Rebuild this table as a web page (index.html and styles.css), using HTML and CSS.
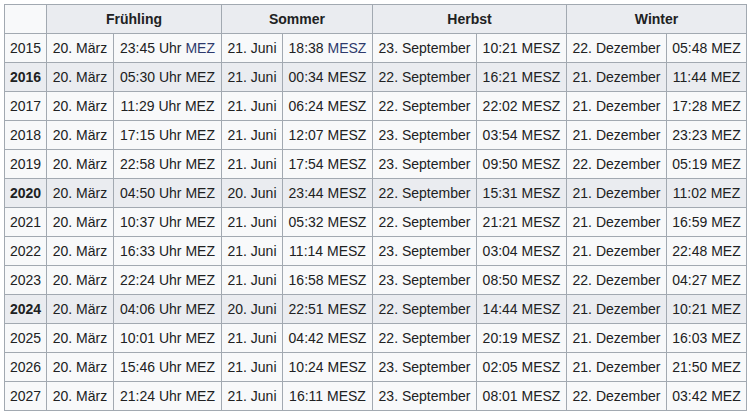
FILE: index.html
```html
<!DOCTYPE html>
<html lang="de">
<head>
<meta charset="utf-8">
<title>Jahreszeiten</title>
<link rel="stylesheet" href="styles.css">
</head>
<body>
<table class="wikitable">
<colgroup>
<col class="c-year"><col class="c-d1"><col class="c-t1"><col class="c-d2"><col class="c-t2"><col class="c-d3"><col class="c-t3"><col class="c-d4"><col class="c-t4">
</colgroup>
<thead>
<tr><th class="corner"></th><th colspan="2">Frühling</th><th colspan="2">Sommer</th><th colspan="2">Herbst</th><th colspan="2">Winter</th></tr>
</thead>
<tbody>
<tr><td>2015</td><td>20. März</td><td>23:45 Uhr <span class="lnk">MEZ</span></td><td>21. Juni</td><td>18:38 <span class="lnk">MESZ</span></td><td>23. September</td><td>10:21 MESZ</td><td>22. Dezember</td><td>05:48 MEZ</td></tr>
<tr class="hl"><th>2016</th><td>20. März</td><td>05:30 Uhr MEZ</td><td>21. Juni</td><td>00:34 MESZ</td><td>22. September</td><td>16:21 MESZ</td><td>21. Dezember</td><td>11:44 MEZ</td></tr>
<tr><td>2017</td><td>20. März</td><td>11:29 Uhr MEZ</td><td>21. Juni</td><td>06:24 MESZ</td><td>22. September</td><td>22:02 MESZ</td><td>21. Dezember</td><td>17:28 MEZ</td></tr>
<tr><td>2018</td><td>20. März</td><td>17:15 Uhr MEZ</td><td>21. Juni</td><td>12:07 MESZ</td><td>23. September</td><td>03:54 MESZ</td><td>21. Dezember</td><td>23:23 MEZ</td></tr>
<tr><td>2019</td><td>20. März</td><td>22:58 Uhr MEZ</td><td>21. Juni</td><td>17:54 MESZ</td><td>23. September</td><td>09:50 MESZ</td><td>22. Dezember</td><td>05:19 MEZ</td></tr>
<tr class="hl"><th>2020</th><td>20. März</td><td>04:50 Uhr MEZ</td><td>20. Juni</td><td>23:44 MESZ</td><td>22. September</td><td>15:31 MESZ</td><td>21. Dezember</td><td>11:02 MEZ</td></tr>
<tr><td>2021</td><td>20. März</td><td>10:37 Uhr MEZ</td><td>21. Juni</td><td>05:32 MESZ</td><td>22. September</td><td>21:21 MESZ</td><td>21. Dezember</td><td>16:59 MEZ</td></tr>
<tr><td>2022</td><td>20. März</td><td>16:33 Uhr MEZ</td><td>21. Juni</td><td>11:14 MESZ</td><td>23. September</td><td>03:04 MESZ</td><td>21. Dezember</td><td>22:48 MEZ</td></tr>
<tr><td>2023</td><td>20. März</td><td>22:24 Uhr MEZ</td><td>21. Juni</td><td>16:58 MESZ</td><td>23. September</td><td>08:50 MESZ</td><td>22. Dezember</td><td>04:27 MEZ</td></tr>
<tr class="hl"><th>2024</th><td>20. März</td><td>04:06 Uhr MEZ</td><td>20. Juni</td><td>22:51 MESZ</td><td>22. September</td><td>14:44 MESZ</td><td>21. Dezember</td><td>10:21 MEZ</td></tr>
<tr><td>2025</td><td>20. März</td><td>10:01 Uhr MEZ</td><td>21. Juni</td><td>04:42 MESZ</td><td>22. September</td><td>20:19 MESZ</td><td>21. Dezember</td><td>16:03 MEZ</td></tr>
<tr><td>2026</td><td>20. März</td><td>15:46 Uhr MEZ</td><td>21. Juni</td><td>10:24 MESZ</td><td>23. September</td><td>02:05 MESZ</td><td>21. Dezember</td><td>21:50 MEZ</td></tr>
<tr><td>2027</td><td>20. März</td><td>21:24 Uhr MEZ</td><td>21. Juni</td><td>16:11 MESZ</td><td>23. September</td><td>08:01 MESZ</td><td>22. Dezember</td><td>03:42 MEZ</td></tr>
</tbody>
</table>
</body>
</html>
```
FILE: styles.css
```css
html, body {
  margin: 0;
  padding: 0;
  background: #ffffff;
}
body {
  padding: 4px;
  font-family: "Liberation Sans", Arial, sans-serif;
  font-size: 14px;
  color: #202122;
}
.wikitable {
  border-collapse: collapse;
  table-layout: fixed;
  width: 743px;
  background: #f8f9fa;
  color: #202122;
  border: 1px solid #a2a9b1;
}
.wikitable th,
.wikitable td {
  border: 1px solid #a2a9b1;
  padding: 3px 0;
  height: 22px;
  line-height: 22px;
  text-align: center;
  white-space: nowrap;
  overflow: hidden;
  font-weight: normal;
}
.wikitable thead th {
  background: #eaecf0;
  font-weight: bold;
}
.wikitable thead th.corner {
  background: #f8f9fa;
}
.wikitable tr.hl td,
.wikitable tr.hl th {
  background: #eaecf0;
}
.wikitable tr.hl th {
  font-weight: bold;
}
.lnk {
  color: #2e3a6c;
}
.c-year { width: 42px; }
.c-d1 { width: 67px; }
.c-t1 { width: 108px; }
.c-d2 { width: 61px; }
.c-t2 { width: 90px; }
.c-d3 { width: 104px; }
.c-t3 { width: 90px; }
.c-d4 { width: 100px; }
.c-t4 { width: 80px; }
```
